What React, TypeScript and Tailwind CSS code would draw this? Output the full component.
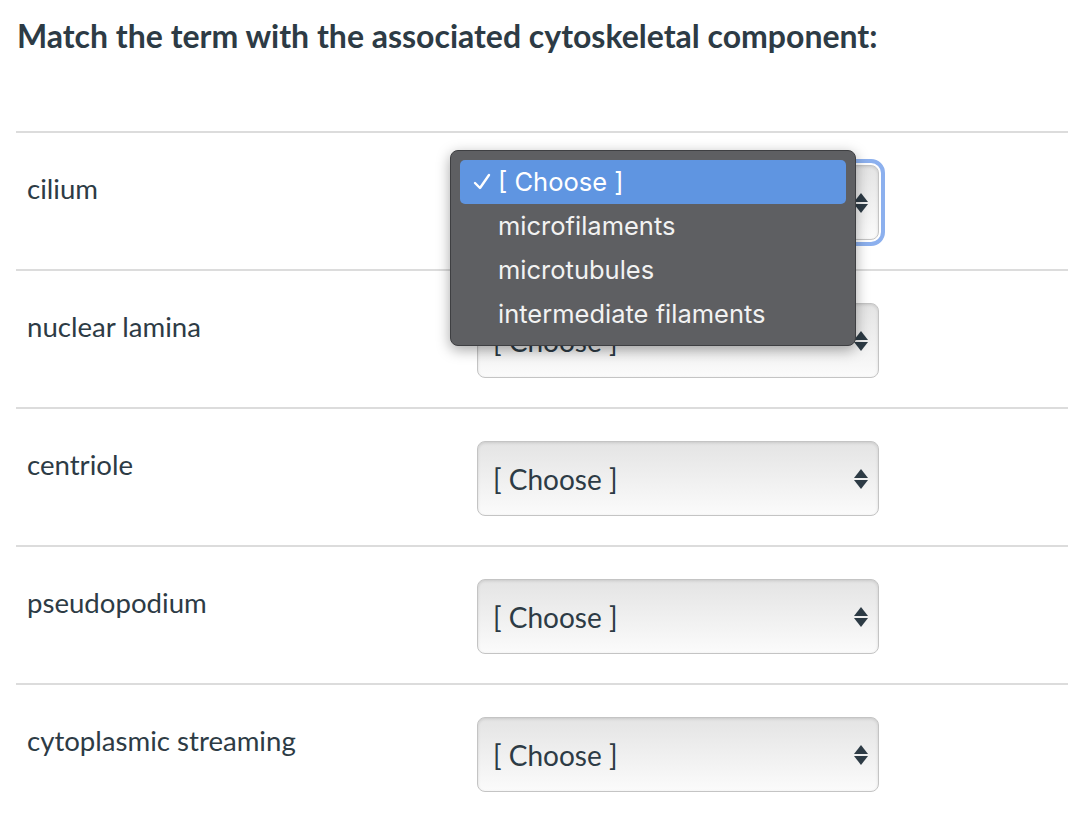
import { useState } from "react";

const terms = ["cilium", "nuclear lamina", "centriole", "pseudopodium", "cytoplasmic streaming"];
const options = ["[ Choose ]", "microfilaments", "microtubules", "intermediate filaments"];

function Arrows() {
  return (
    <svg width="16" height="26" viewBox="0 0 16 26" className="text-[#2d3b45]">
      <path d="M8 3 L15 12 L1 12 Z" fill="currentColor" />
      <path d="M1 14 L15 14 L8 23 Z" fill="currentColor" />
    </svg>
  );
}

function Check() {
  return (
    <svg width="18" height="18" viewBox="0 0 18 18">
      <path d="M2 10 L7 15 L16 2" fill="none" stroke="white" strokeWidth="2.4" strokeLinecap="round" strokeLinejoin="round" />
    </svg>
  );
}

function FakeSelect({ focused }: { focused?: boolean }) {
  return (
    <div
      className={
        "relative w-[402px] h-[75px] rounded-[8px] border border-[#c4c4c4] bg-gradient-to-b from-[#e4e4e4] to-[#fbfbfb] shadow-[inset_0_1px_3px_rgba(0,0,0,0.12)] flex items-center justify-between pl-[15px] pr-[9px] " +
        (focused ? "outline outline-[4px] outline-[#8cb0ee] outline-offset-[2px]" : "")
      }
    >
      <span className="text-[28px] text-[#2d3b45] leading-none" style={{ fontFamily: "Lato, sans-serif" }}>
        [ Choose ]
      </span>
      <Arrows />
    </div>
  );
}

export default function App() {
  const [selected] = useState(0);

  return (
    <div className="w-[1068px] min-h-[828px] bg-white relative" style={{ fontFamily: "Lato, sans-serif" }}>
      <h1 className="pl-[17px] pt-[14px] text-[32px] font-bold text-[#2d3b45] leading-[44px]">
        Match the term with the associated cytoskeletal component:
      </h1>

      <div className="mt-[73px] ml-[16px]">
        {terms.map((term, i) => (
          <div key={term} className="relative border-t-2 border-[#dcdcdc] h-[138px] flex">
            <div className="w-[461px] pl-[11px] pt-[40px] text-[27.6px] text-[#2d3b45] leading-[32px]">{term}</div>
            <div className="pt-[32px]">
              <FakeSelect focused={i === 0} />
            </div>

            {i === 0 && (
              <div className="absolute left-[434px] top-[17px] z-10 w-[406px] rounded-[8px] border border-[#3e3f42] bg-[#5e5f62] p-[9px] shadow-[0_4px_14px_rgba(0,0,0,0.35)]">
                {options.map((opt, j) => (
                  <div
                    key={opt}
                    className={
                      "h-[44px] rounded-[5px] flex items-center text-[25.5px] text-[#f2f2f2] " +
                      (j === selected ? "bg-[#5f95e1] text-white" : "")
                    }
                    style={{ fontFamily: "Inter, 'Noto Sans', sans-serif" }}
                  >
                    <span className="w-[38px] pl-[13px] flex items-center">{j === selected ? <Check /> : null}</span>
                    <span>{opt}</span>
                  </div>
                ))}
              </div>
            )}
          </div>
        ))}
      </div>
    </div>
  );
}
